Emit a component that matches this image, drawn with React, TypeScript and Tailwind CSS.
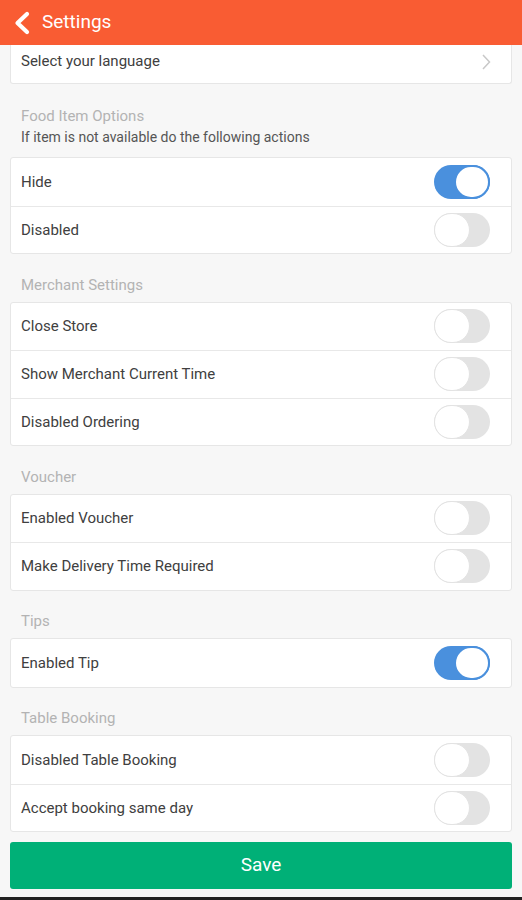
import React from "react";

function Toggle({ on }: { on: boolean }) {
  return on ? (
    <div className="relative h-[34px] w-[56px] rounded-full bg-[#4a90dd]">
      <div className="absolute right-0 top-0 h-[34px] w-[36px] rounded-full border-[2px] border-[#4a90dd] bg-white" />
    </div>
  ) : (
    <div className="relative h-[34px] w-[56px] rounded-full bg-[#e3e3e3]">
      <div className="absolute left-0 top-0 h-[34px] w-[36px] rounded-full border border-[#e3e3e3] bg-white" />
    </div>
  );
}

function Row({ label, on, first }: { label: string; on: boolean; first?: boolean }) {
  return (
    <div
      className={
        "flex h-[47.5px] items-center justify-between pl-[10px] pr-[21px] " +
        (first ? "" : "border-t border-[#e8e8e8]")
      }
    >
      <span className="text-[15px] text-[#404040]">{label}</span>
      <Toggle on={on} />
    </div>
  );
}

function Card({ rows }: { rows: [string, boolean][] }) {
  return (
    <div className="mx-[10px] rounded-[3px] border border-[#e6e6e6] bg-white">
      {rows.map(([l, o], i) => (
        <Row key={l} label={l} on={o} first={i === 0} />
      ))}
    </div>
  );
}

function Label({ text }: { text: string }) {
  return (
    <div className="pb-[7px] pl-[21px] pt-[20.5px] text-[15px] leading-[20px] text-[#b3b3b3]">{text}</div>
  );
}

export default function App() {
  return (
    <div className="flex h-[900px] w-[522px] flex-col bg-[#f7f7f7] font-['Roboto',sans-serif]">
      <div className="flex h-[45px] items-center bg-[#f95c33]">
        <svg width="20" height="24" viewBox="0 0 20 24" className="ml-[12px]">
          <path d="M15 3 L5.5 12 L15 21" fill="none" stroke="white" strokeWidth="4.2" strokeLinecap="round" strokeLinejoin="round" />
        </svg>
        <span className="ml-[10px] text-[19px] text-white">Settings</span>
      </div>

      <div className="mx-[10px] flex h-[39px] items-center justify-between rounded-b-[3px] border border-t-0 border-[#e6e6e6] bg-white pl-[10px] pr-[20px]">
        <span className="-mt-[5px] text-[15px] text-[#404040]">Select your language</span>
        <svg width="10" height="16" viewBox="0 0 10 16" className="-mt-[4px]">
          <path d="M2 1 L8.5 8 L2 15" fill="none" stroke="#c8c8c8" strokeWidth="1.5" />
        </svg>
      </div>

      <div className="pb-[10px] pl-[21px] pt-[22px]">
        <div className="text-[15px] leading-[21px] text-[#b3b3b3]">Food Item Options</div>
        <div className="text-[14px] leading-[20px] text-[#555]">If item is not available do the following actions</div>
      </div>
      <Card rows={[["Hide", true], ["Disabled", false]]} />

      <Label text="Merchant Settings" />
      <Card
        rows={[
          ["Close Store", false],
          ["Show Merchant Current Time", false],
          ["Disabled Ordering", false],
        ]}
      />

      <Label text="Voucher" />
      <Card
        rows={[
          ["Enabled Voucher", false],
          ["Make Delivery Time Required", false],
        ]}
      />

      <Label text="Tips" />
      <Card rows={[["Enabled Tip", true]]} />

      <Label text="Table Booking" />
      <Card
        rows={[
          ["Disabled Table Booking", false],
          ["Accept booking same day", false],
        ]}
      />

      <div className="mx-[10px] mt-[10px] flex h-[47px] items-center justify-center rounded-[3px] bg-[#00b077]">
        <span className="text-[19px] text-white">Save</span>
      </div>
      <div className="flex-1" />
      <div className="h-[3px] bg-[#222]" />
    </div>
  );
}
